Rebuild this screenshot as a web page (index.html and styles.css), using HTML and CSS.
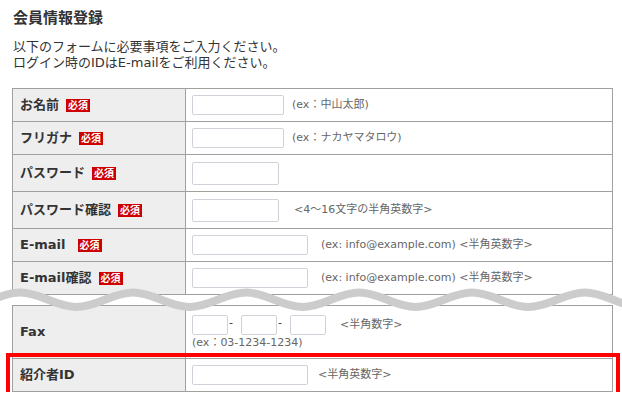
FILE: index.html
```html
<!DOCTYPE html>
<html lang="ja">
<head>
<meta charset="utf-8">
<title>会員情報登録</title>
<link rel="stylesheet" href="styles.css">
</head>
<body>
<div class="page">
  <h1 class="title">会員情報登録</h1>
  <p class="lead">以下のフォームに必要事項をご入力ください。<br>ログイン時のIDはE-mailをご利用ください。</p>

  <div class="form-grid top">
    <div class="lbl">お名前<span class="req">必須</span></div>
    <div class="val"><span class="field in-m"></span><span class="hint h8">(ex：中山太郎)</span></div>

    <div class="lbl">フリガナ<span class="req">必須</span></div>
    <div class="val"><span class="field in-m"></span><span class="hint h8">(ex：ナカヤマタロウ)</span></div>

    <div class="lbl tall">パスワード<span class="req">必須</span></div>
    <div class="val tall"><span class="field in-s"></span></div>

    <div class="lbl tall">パスワード確認<span class="req">必須</span></div>
    <div class="val tall"><span class="field in-s"></span><span class="hint h15">&lt;4〜16文字の半角英数字&gt;</span></div>

    <div class="lbl">E-mail<span class="req wide">必須</span></div>
    <div class="val"><span class="field in-l"></span><span class="hint h13">(ex: info@example.com) &lt;半角英数字&gt;</span></div>

    <div class="lbl">E-mail確認<span class="req">必須</span></div>
    <div class="val"><span class="field in-l"></span><span class="hint h13">(ex: info@example.com) &lt;半角英数字&gt;</span></div>
  </div>

  <div class="cut">
    <svg class="wave" width="622" height="30" viewBox="0 0 622 30" aria-hidden="true">
      <path d="M -93 8.5 C -72.47 8.5 -57.03 23 -36.5 23 S -0.53 8.5 20 8.5 S 55.97 23 76.5 23 S 112.47 8.5 133 8.5 S 168.97 23 189.5 23 S 225.47 8.5 246 8.5 S 281.97 23 302.5 23 S 338.47 8.5 359 8.5 S 394.97 23 415.5 23 S 451.47 8.5 472 8.5 S 507.97 23 528.5 23 S 564.47 8.5 585 8.5 S 620.97 23 641.5 23 S 677.47 8.5 698 8.5" fill="none" stroke="#cccccc" stroke-width="8"/>
    </svg>
  </div>

  <div class="bottom-wrap">
    <div class="form-grid">
      <div class="lbl fax">Fax</div>
      <div class="val fax">
        <div class="fax-row">
          <span class="field in-xs"></span><span class="dash">-</span><span class="field in-xs"></span><span class="dash">-</span><span class="field in-xs"></span><span class="hint h14">&lt;半角数字&gt;</span>
        </div>
        <div class="hint ex">(ex：03-1234-1234)</div>
      </div>

      <div class="lbl">紹介者ID</div>
      <div class="val"><span class="field in-l"></span><span class="hint h10">&lt;半角英数字&gt;</span></div>
    </div>
    <div class="highlight"></div>
  </div>
</div>
</body>
</html>
```

FILE: styles.css
```css
html, body {
  margin: 0;
  padding: 0;
  background: #ffffff;
  overflow: hidden;
}

body {
  font-family: "DejaVu Sans", "Noto Sans CJK JP", sans-serif;
  color: #333333;
}

.page {
  padding: 8px 0 0 12px;
}

.title {
  margin: 0;
  padding-left: 1px;
  font-size: 15px;
  line-height: 20px;
  font-weight: bold;
  color: #333333;
}

.lead {
  margin: 11px 0 0 0;
  padding-left: 1px;
  font-size: 13px;
  line-height: 16px;
}

.form-grid {
  display: grid;
  grid-template-columns: 173px 427px;
  width: 601px;
  border-top: 1px solid #a0a0a0;
  border-left: 1px solid #a0a0a0;
  box-sizing: border-box;
}

.top {
  margin-top: 17px;
}

.lbl,
.val {
  box-sizing: border-box;
  height: 33px;
  border-right: 1px solid #a0a0a0;
  border-bottom: 1px solid #a0a0a0;
  display: flex;
  align-items: center;
}

.lbl {
  background: #eeeeee;
  padding-left: 7px;
  font-size: 13px;
  line-height: 16px;
  font-weight: bold;
  color: #333333;
}

.val {
  background: #ffffff;
  padding-left: 6px;
}

.tall {
  height: 37px;
}

.fax {
  height: 53px;
}

.val.fax {
  flex-direction: column;
  align-items: flex-start;
  justify-content: flex-start;
  padding-top: 9px;
}

.fax-row {
  display: flex;
  align-items: center;
  height: 20px;
}

.req {
  display: inline-block;
  margin-left: 7px;
  padding: 0 2px;
  background: #cc0000;
  color: #ffffff;
  font-size: 10px;
  line-height: 13px;
  font-weight: bold;
}

.req.wide {
  margin-left: 12px;
}

.field {
  display: inline-block;
  box-sizing: border-box;
  height: 20px;
  border: 1px solid #cfd3d9;
  border-radius: 2px;
  background: #ffffff;
  flex: none;
}

.in-m { width: 92px; }
.in-s { width: 87px; height: 23px; }
.in-l { width: 116px; }
.in-xs { width: 36px; }

.hint {
  font-size: 11px;
  line-height: 14px;
  color: #666666;
  white-space: nowrap;
}

.h8 { margin-left: 8px; }
.h10 { margin-left: 10px; }
.h13 { margin-left: 13px; }
.h14 { margin-left: 14px; }
.h15 { margin-left: 15px; }

.ex {
  margin-top: 1px;
}

.dash {
  font-size: 11px;
  line-height: 14px;
  color: #333333;
  margin: -4px 8px 0 1px;
}

.cut {
  position: relative;
  height: 10px;
}

.wave {
  position: absolute;
  top: -11px;
  left: -12px;
  z-index: 2;
  display: block;
}

.bottom-wrap {
  position: relative;
  width: 601px;
}

.highlight {
  position: absolute;
  left: -6px;
  top: 48px;
  width: 614px;
  height: 44px;
  box-sizing: border-box;
  border: 4px solid #ff0000;
  pointer-events: none;
}
```
